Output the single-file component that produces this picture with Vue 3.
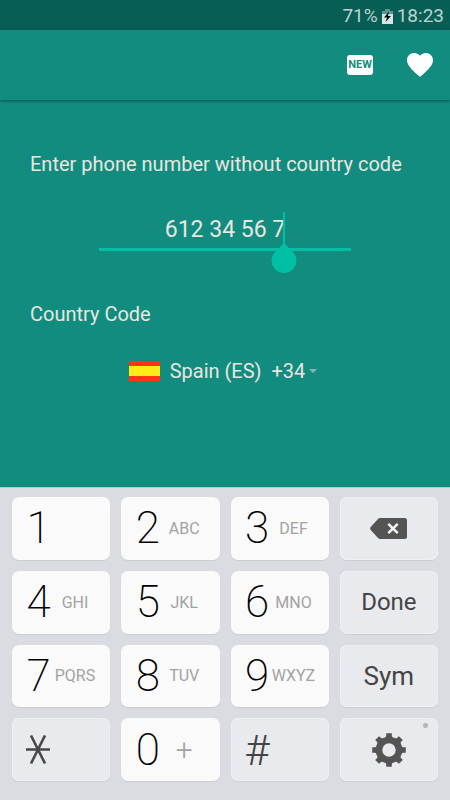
<script setup>
import { ref } from 'vue'

const phone = ref('612 34 56 7')
const country = ref('ES')
const countries = [
  { code: 'ES', name: 'Spain', dial: '+34' },
  { code: 'FR', name: 'France', dial: '+33' },
  { code: 'PT', name: 'Portugal', dial: '+351' },
]

const keys = [
  { id: '1', label: '1' },
  { id: '2', label: '2', sub: 'ABC' },
  { id: '3', label: '3', sub: 'DEF' },
  { id: 'delete', icon: 'delete', title: 'Delete' },
  { id: '4', label: '4', sub: 'GHI' },
  { id: '5', label: '5', sub: 'JKL' },
  { id: '6', label: '6', sub: 'MNO' },
  { id: 'done', word: 'Done' },
  { id: '7', label: '7', sub: 'PQRS' },
  { id: '8', label: '8', sub: 'TUV' },
  { id: '9', label: '9', sub: 'WXYZ' },
  { id: 'sym', word: 'Sym', large: true },
  { id: 'star', icon: 'star', title: 'Star' },
  { id: '0', label: '0', sub: '+', plus: true },
  { id: 'hash', label: '#', muted: true },
  { id: 'settings', icon: 'gear', title: 'Settings', dot: true },
]

const isFunction = (key) => Boolean(key.icon || key.word || key.muted)
const teeth = [0, 45, 90, 135, 180, 225, 270, 315]
</script>

<template>
  <div class="screen">
    <div class="status">
      <span>71%</span>
      <svg class="battery" width="11" height="15" viewBox="0 0 11 15" aria-hidden="true">
        <path d="M3 0h5v2h3v3H0V2h3z" fill="#5f958e" />
        <path d="M0 5h11v10H0z" fill="#d9e5e3" />
        <path d="M7 2.5L2 8.5h3L3.5 13L9 7H6z" fill="#06110f" />
      </svg>
      <span>18:23</span>
    </div>

    <header class="appbar">
      <button class="action" type="button" aria-label="What's new">
        <span class="badge">NEW</span>
      </button>
      <button class="action" type="button" aria-label="Favourite">
        <svg width="26" height="24" viewBox="2 3 20 18.35" preserveAspectRatio="none">
          <path
            fill="#fff"
            d="M12 21.35l-1.45-1.32C5.4 15.36 2 12.28 2 8.5 2 5.42 4.42 3 7.5 3c1.74 0 3.41.81 4.5 2.09C13.09 3.81 14.76 3 16.5 3 19.58 3 22 5.42 22 8.5c0 3.78-3.4 6.86-8.55 11.54L12 21.35z"
          />
        </svg>
      </button>
    </header>

    <main class="form">
      <label class="caption" for="phone">Enter phone number without country code</label>
      <div class="field">
        <input id="phone" v-model="phone" class="phone" type="tel" />
        <span class="caret"></span>
        <svg class="handle" width="26" height="30" viewBox="0 0 26 30" aria-hidden="true">
          <path d="M13 0L21.8 8.7A12.5 12.5 0 1 1 4.2 8.7z" fill="#00bfa5" />
        </svg>
      </div>

      <label class="caption" for="country">Country Code</label>
      <div class="country">
        <svg class="flag" width="31" height="20" viewBox="0 0 31 20" aria-hidden="true">
          <rect width="31" height="20" fill="#ff3512" />
          <rect y="5" width="31" height="10" fill="#ffec17" />
        </svg>
        <select id="country" v-model="country" class="select">
          <option v-for="c in countries" :key="c.code" :value="c.code">
            {{ c.name }} ({{ c.code }})&nbsp; {{ c.dial }}
          </option>
        </select>
        <svg class="arrow" width="8" height="4" viewBox="0 0 8 4" aria-hidden="true">
          <path d="M0 0h8L4 4z" fill="#7fbab2" />
        </svg>
      </div>
    </main>

    <section class="keypad" aria-label="Keypad">
      <button
        v-for="key in keys"
        :key="key.id"
        type="button"
        class="key"
        :class="{ function: isFunction(key), centered: key.word || key.icon === 'delete' || key.icon === 'gear' }"
        :aria-label="key.title"
      >
        <template v-if="key.label">
          <span class="digit" :class="{ symbol: key.muted }">{{ key.label }}</span>
          <span v-if="key.sub" class="sub" :class="{ plus: key.plus }">{{ key.sub }}</span>
        </template>
        <span v-else-if="key.word" class="word" :class="{ large: key.large }">{{ key.word }}</span>

        <svg v-else-if="key.icon === 'delete'" width="37" height="21" viewBox="0 0 37 21">
          <path d="M10 0H34.5Q37 0 37 2.5V18.5Q37 21 34.5 21H10Q9 21 8 20L.7 12Q-.4 10.5 .7 9L8 1Q9 0 10 0z" fill="#545454" />
          <path d="M18.3 5.8l9.4 9.4M27.7 5.8l-9.4 9.4" stroke="#f2f3f6" stroke-width="2.6" />
        </svg>

        <svg v-else-if="key.icon === 'star'" width="24" height="30" viewBox="0 0 24 30">
          <path d="M0 14.5h24M5 .5l14 28M19 .5L5 28.5" stroke="#484848" stroke-width="2.6" />
        </svg>

        <svg v-else width="34" height="34" viewBox="-17 -17 34 34">
          <circle r="10" fill="none" stroke="#545454" stroke-width="6.6" />
          <path
            v-for="angle in teeth"
            :key="angle"
            d="M-4 -11.5L-2.8 -14V-16.8H2.8V-14L4 -11.5z"
            :transform="`rotate(${angle})`"
            fill="#545454"
          />
        </svg>
        <span v-if="key.dot" class="dot"></span>
      </button>
    </section>
  </div>
</template>

<style>
body {
  margin: 0;
}
</style>

<style scoped>
.screen {
  display: flex;
  flex-direction: column;
  min-height: 100vh;
  background: #128c7e;
  color: #e9e6e0;
  font-family: Roboto, sans-serif;
  font-weight: 400;
}

button,
input,
select {
  margin: 0;
  border: 0;
  font-family: inherit;
  font-weight: inherit;
}

.status {
  display: flex;
  align-items: center;
  justify-content: flex-end;
  gap: 4px;
  height: 30px;
  padding: 2px 6px 0 0;
  box-sizing: border-box;
  background: #075e54;
  color: #bcd3d0;
  font-size: 19px;
  line-height: 28px;
}

.appbar {
  display: flex;
  align-items: center;
  justify-content: flex-end;
  gap: 12px;
  height: 70px;
  padding-right: 6px;
  box-shadow: 0 1px 3px rgba(0, 0, 0, 0.45);
}

.action {
  display: flex;
  align-items: center;
  justify-content: center;
  width: 48px;
  height: 48px;
  padding: 0;
  background: transparent;
}

.badge {
  width: 26px;
  border-radius: 3px;
  background: #fff;
  color: #128c7e;
  font-size: 11px;
  font-weight: 700;
  line-height: 20px;
  text-align: center;
}

.form {
  display: flex;
  flex: 1;
  flex-direction: column;
  padding: 52px 30px 0;
}

.caption {
  font-size: 20px;
  line-height: 24px;
}

.field {
  position: relative;
  align-self: center;
  width: 252px;
  margin: 36px 0 51px;
}

.phone {
  display: block;
  width: 100%;
  height: 39px;
  box-sizing: border-box;
  padding: 0 0 1px;
  border-bottom: 3px solid #00bfa5;
  outline: 0;
  background: transparent;
  color: inherit;
  font-size: 23px;
  text-align: center;
}

.caret {
  position: absolute;
  top: 0;
  left: calc(50% + 58px);
  width: 2px;
  height: 32px;
  background: #00bfa5;
}

.handle {
  position: absolute;
  top: 31px;
  left: calc(50% + 46px);
}

.country {
  display: flex;
  align-items: center;
  align-self: center;
  margin: 32px 4px 0 0;
}

.select {
  field-sizing: content;
  height: 26px;
  margin: 0 4px 0 10px;
  padding: 0;
  appearance: none;
  outline: 0;
  background: transparent;
  color: inherit;
  font-size: 20px;
}

.keypad {
  display: grid;
  grid-template-columns: repeat(4, 1fr);
  grid-template-rows: repeat(4, 1fr);
  gap: 11px;
  height: 313px;
  box-sizing: border-box;
  padding: 10px 12px 19px;
  background: #dadce1;
  box-shadow: inset 0 1px 0 #b5c9cb;
}

.key {
  position: relative;
  display: flex;
  align-items: center;
  padding: 0 0 0 14px;
  border-radius: 7px;
  background: #fafafa;
  box-shadow: 0 1px 1px #cbcdd2;
  color: #000;
}

.key.function {
  background: #e9eaee;
  box-shadow: 0 1px 1px #cbcdd2, inset 0 0 0 1px #eff0f3;
  color: #444;
}

.key.centered {
  justify-content: center;
  padding: 0;
}

.digit {
  width: 25px;
  font-size: 44px;
  font-weight: 200;
  line-height: 52px;
}

.digit.symbol {
  font-size: 43px;
  font-weight: 350;
}

.sub {
  width: 48px;
  color: #a2a2a2;
  font-size: 16px;
  text-align: center;
}

.sub.plus {
  font-size: 30px;
  font-weight: 350;
}

.word {
  font-size: 24px;
}

.word.large {
  font-size: 26px;
}

.dot {
  position: absolute;
  top: 5px;
  right: 10px;
  width: 5px;
  height: 5px;
  border-radius: 50%;
  background: #b4b5b8;
}
</style>
